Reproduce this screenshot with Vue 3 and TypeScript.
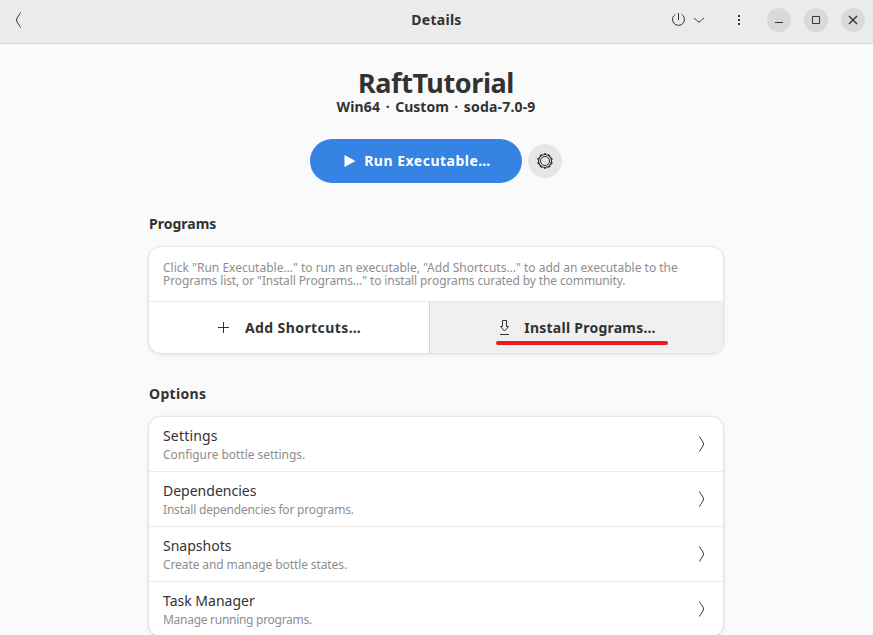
<script setup lang="ts">
interface Option {
  title: string
  subtitle: string
  key: string
}

const options: Option[] = [
  { key: 'settings', title: 'Settings', subtitle: 'Configure bottle settings.' },
  { key: 'dependencies', title: 'Dependencies', subtitle: 'Install dependencies for programs.' },
  { key: 'snapshots', title: 'Snapshots', subtitle: 'Create and manage bottle states.' },
  { key: 'tasks', title: 'Task Manager', subtitle: 'Manage running programs.' },
]
</script>

<template>
  <div class="window">
    <header class="headerbar">
      <button class="icon-button back" aria-label="Back">
        <svg width="16" height="16" viewBox="0 0 16 16"><path d="M10.5 .5C9.8 2.800 6.500 5.500 6.500 8s3.300 5.200 4 7.500" /></svg>
      </button>
      <h1>Details</h1>
      <div class="actions">
        <button class="icon-button power" aria-label="Power">
          <svg width="16" height="16" viewBox="0 0 16 16"><path d="M8.500 1v7M5.300 2.300a6 6 0 1 0 6.400 0" /></svg>
          <svg class="caret" width="12" height="16" viewBox="0 0 12 16"><path d="M1 6c1.800 1 3.500 4 5 4s3.200-3 5-4" /></svg>
        </button>
        <button class="icon-button menu" aria-label="Menu">
          <svg width="16" height="16" viewBox="0 0 16 16"><path class="solid" d="M7 3h2v2H7zM7 7h2v2H7zM7 11h2v2H7z" /></svg>
        </button>
        <button class="control" aria-label="Minimize">
          <svg width="16" height="16" viewBox="0 0 16 16"><path d="M4 10.500h8" /></svg>
        </button>
        <button class="control" aria-label="Maximize">
          <svg width="16" height="16" viewBox="0 0 16 16"><path d="M4.500 4.500h7v7h-7z" /></svg>
        </button>
        <button class="control" aria-label="Close">
          <svg width="16" height="16" viewBox="0 0 16 16"><path class="cross" d="M4 4l8 8M12 4l-8 8" /></svg>
        </button>
      </div>
    </header>

    <main class="page">
      <h2 class="bottle-name">RaftTutorial</h2>
      <p class="bottle-info"><span class="arch">Win64</span><i>·</i><span>Custom</span><i>·</i><span class="runner">soda-7.0-9</span></p>

      <div class="run-row">
        <button class="run">
          <svg width="12" height="12" viewBox="0 0 12 12"><path d="M.5 0v12L11.500 6z" /></svg>
          <span>Run Executable…</span>
        </button>
        <button class="gear" aria-label="Run options">
          <svg width="18" height="18" viewBox="0 0 18 18">
            <circle class="teeth" cx="9" cy="9" r="7.200" pathLength="60" />
            <circle class="rim" cx="9" cy="9" r="6.500" />
            <circle cx="9" cy="9" r="4.500" />
          </svg>
        </button>
      </div>

      <h3 class="programs-heading">Programs</h3>
      <section class="card">
        <p class="hint">
          <span class="line">Click "Run Executable…" to run an executable, "Add Shortcuts…" to add an executable to the</span>
          <span class="line line-two">Programs list, or "Install Programs…" to install programs curated by the community.</span>
        </p>
        <div class="split">
          <button class="add">
            <svg width="16" height="16" viewBox="0 0 16 16"><path d="M2 7.500h11M7.500 2v11" /></svg>
            <span>Add Shortcuts…</span>
          </button>
          <button class="install">
            <svg width="16" height="16" viewBox="0 0 16 16"><path d="M5.500 1.500h4v6h2L7.500 12l-4-4.500h2zM3 15.500h9" /></svg>
            <span>Install Programs…</span>
            <span class="underline"></span>
          </button>
        </div>
      </section>

      <h3 class="options-heading">Options</h3>
      <section class="card">
        <div v-for="option in options" :key="option.key" class="row" :class="option.key">
          <div class="row-text">
            <span class="row-title">{{ option.title }}</span>
            <span class="row-subtitle">{{ option.subtitle }}</span>
          </div>
          <svg width="16" height="16" viewBox="0 0 16 16"><path d="M5.500 .5c.7 2.300 4 5 4 7.500s-3.300 5.200-4 7.500" /></svg>
        </div>
      </section>
    </main>
  </div>
</template>

<style>
body {
  background: #fafafa;
  overflow: hidden;
}
</style>

<style scoped>
.window {
  height: 635px;
  overflow: hidden;
  background: #fafafa;
  color: #323232;
  font-family: "Noto Sans", "Open Sans", sans-serif;
  font-size: 14px;
}
h1, h2, h3, p { margin: 0; white-space: nowrap; }
button {
  display: flex;
  align-items: center;
  justify-content: center;
  padding: 0;
  border: 0;
  background: none;
  color: inherit;
  font: inherit;
  white-space: nowrap;
}
svg {
  display: block;
  flex: none;
  fill: none;
  stroke: #323232;
}
.solid { fill: #323232; stroke: none; }
.headerbar {
  box-sizing: border-box;
  display: grid;
  grid-template-columns: 1fr auto 1fr;
  align-items: center;
  height: 44px;
  padding: 0 8px 4px 10px;
  background: #ebebeb;
  border-bottom: 1px solid #d5d5d5;
}
.headerbar h1 { margin-left: -2px; font-size: 14px; line-height: 20px; letter-spacing: .27px; }
.back { justify-self: start; }
.actions { display: flex; align-items: center; justify-content: flex-end; }
.power { gap: 7px; }
.menu { margin: 0 20px 0 26px; }
.control { width: 24px; height: 24px; border-radius: 50%; background: #d9d9d9; }
.control + .control { margin-left: 13px; }
.cross { stroke-width: 1.4; }

.page { width: 574px; margin: 0 auto 0 149px; }
.bottle-name { padding-top: 22px; text-align: center; font-size: 27px; line-height: 34px; letter-spacing: -.4px; }
.bottle-info { display: flex; justify-content: center; font-weight: 700; line-height: 14px; }
.bottle-info i { width: 15px; text-align: center; font-style: normal; }
.arch, .runner { letter-spacing: .18px; }
.run-row { display: flex; align-items: center; gap: 6px; margin: 25px 0 0 161px; }
.run { box-sizing: border-box; gap: 8px; width: 212px; height: 44px; padding-left: 3px; border-radius: 22px; background: #3584e4; color: #fff; font-weight: 700; letter-spacing: .5px; }
.run svg { fill: #fff; stroke: none; }
.run span { margin-top: -2px; }
.gear { width: 34px; height: 34px; border-radius: 50%; background: #e6e6e6; }
.teeth { stroke-width: 1.300; stroke-dasharray: 3 3; stroke-dashoffset: -1.500; }
.rim { stroke-width: 1.200; }
h3 { font-size: 14px; line-height: 20px; }
.programs-heading { margin-top: 31px; }
.options-heading { margin-top: 31px; letter-spacing: .32px; }
.card {
  margin-top: 13px;
  border-radius: 12px;
  background: #fff;
  overflow: hidden;
  box-shadow: 0 0 0 1px rgba(0, 0, 0, .05), 0 1px 4px 1px rgba(0, 0, 0, .08);
}
.hint { display: flex; flex-direction: column; height: 54px; box-sizing: border-box; padding: 14px 14px 0; color: #8e8e8e; font-size: 12px; line-height: 13px; }
.line { align-self: flex-start; }
.line-two { letter-spacing: -.11px; }
.split { display: flex; height: 51px; border-top: 1px solid #ebebeb; font-weight: 700; }
.add { gap: 13px; width: 281px; border-right: 1px solid #d5d5d5; letter-spacing: .42px; }
.add span { margin-right: 1px; }
.install { position: relative; flex: 1; gap: 11px; background: #f0f0f0; letter-spacing: .25px; }
.install svg { margin-top: -1px; }
.underline { position: absolute; left: 66px; bottom: 8px; width: 172px; height: 4px; border-radius: 2px; background: #ed1c1c; }
.row { display: flex; align-items: center; justify-content: space-between; height: 54px; padding: 0 13px 0 14px; }
.row + .row { border-top: 1px solid #ebebeb; }
.row-text { display: flex; flex-direction: column; align-items: flex-start; }
.row-title { line-height: 20px; }
.row-subtitle { color: #8e8e8e; font-size: 12px; line-height: 17px; }
.settings .row-title { letter-spacing: .18px; }
.settings .row-subtitle { letter-spacing: -.04px; }
.dependencies .row-subtitle { letter-spacing: -.19px; }
.snapshots .row-subtitle { letter-spacing: -.1px; }
.tasks .row-subtitle { letter-spacing: -.28px; }
</style>
